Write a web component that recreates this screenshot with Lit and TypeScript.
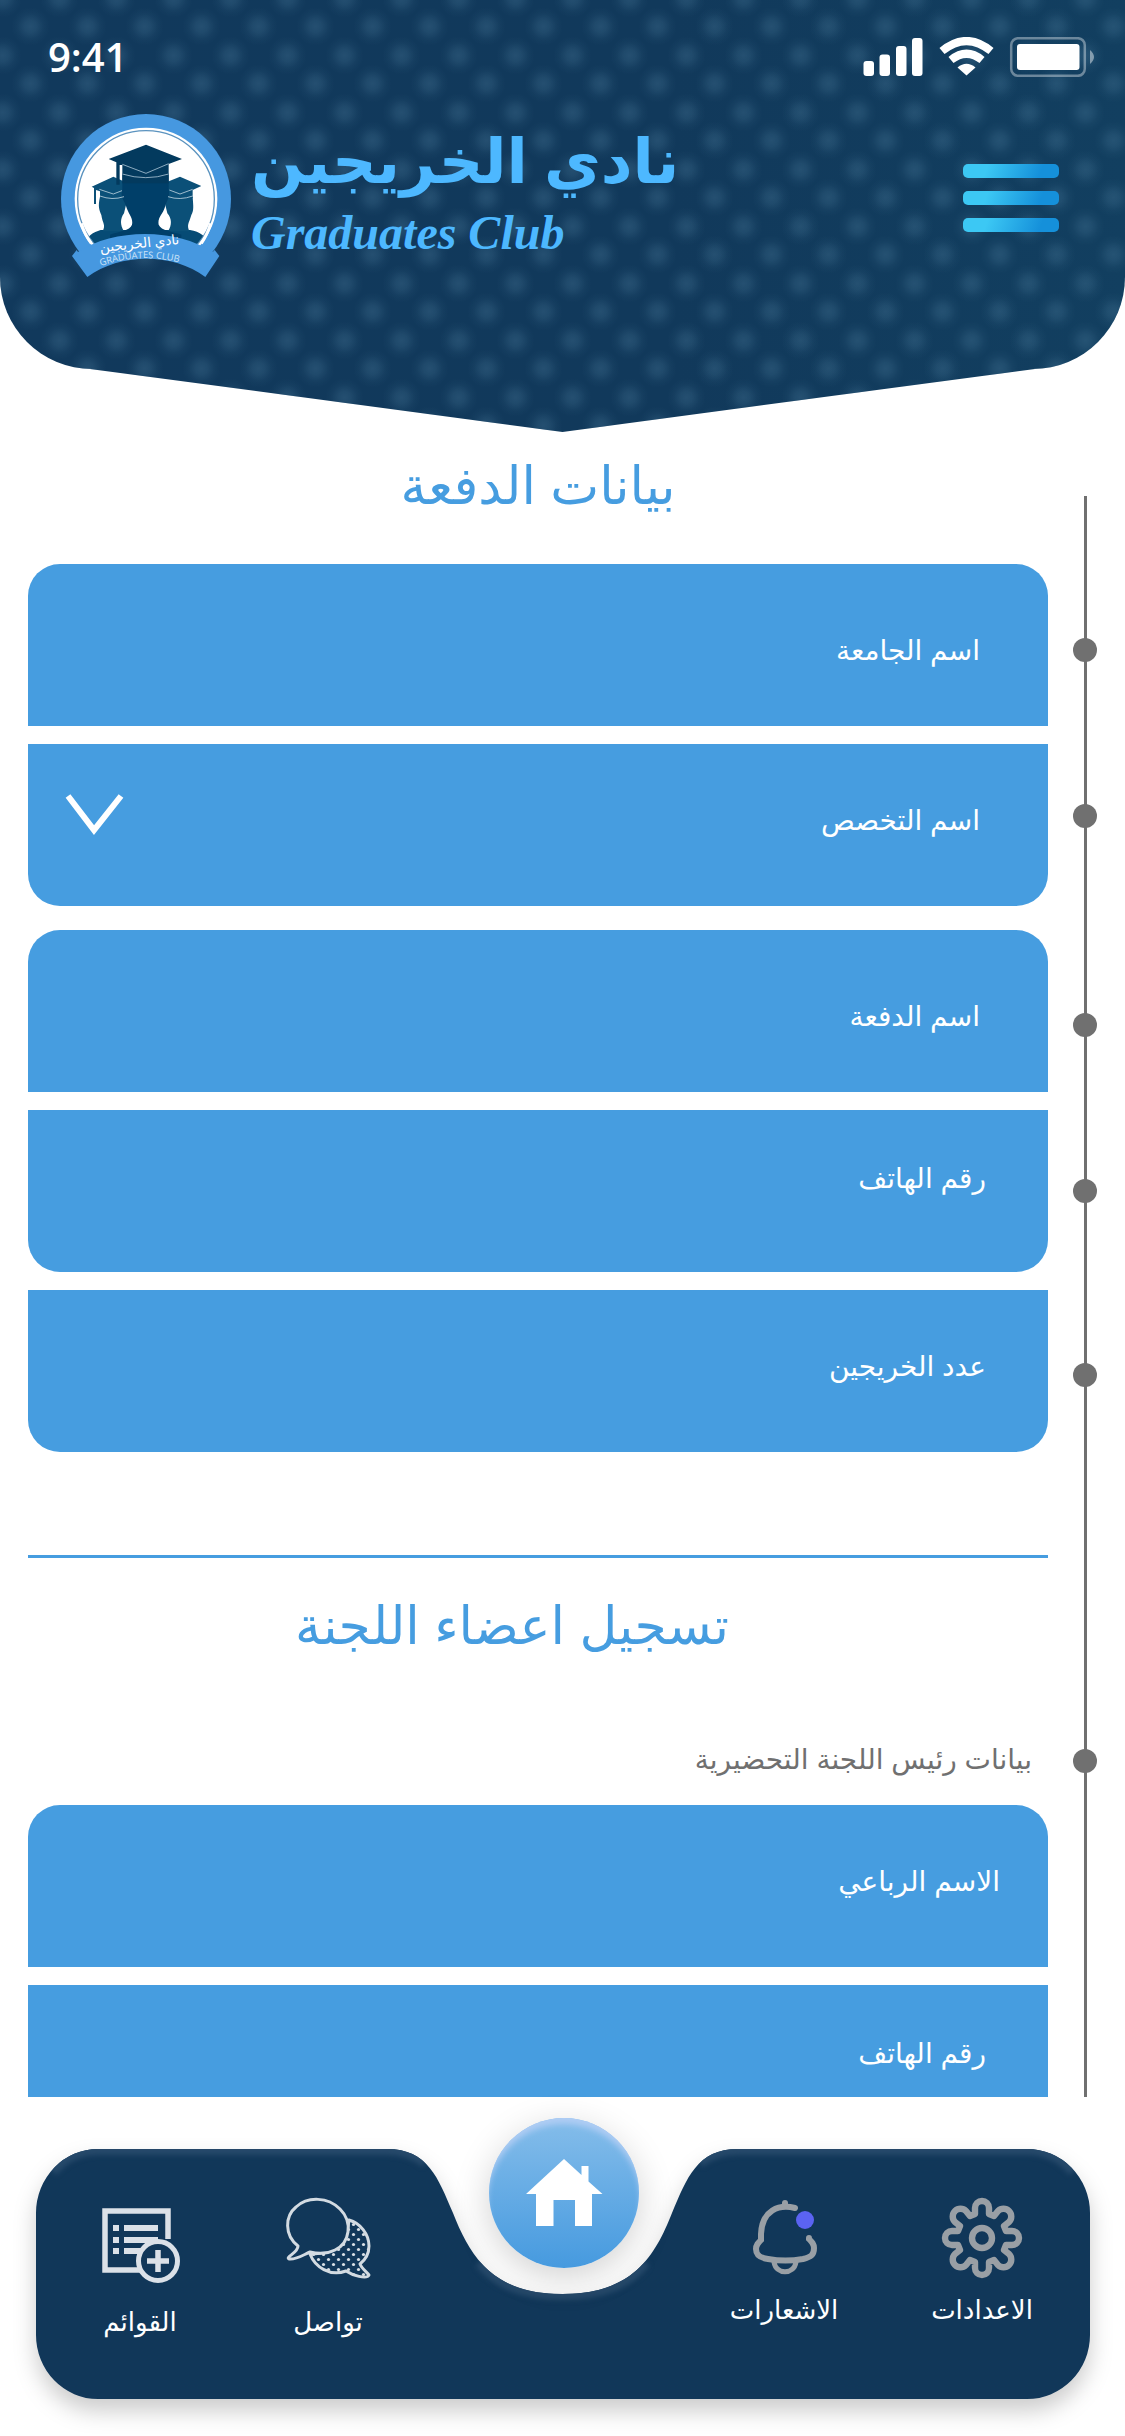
import { LitElement, html, css, svg } from "lit";
import { customElement, property } from "lit/decorators.js";
import { classMap } from "lit/directives/class-map.js";

interface Field {
  id: string;
  label: string;
  shape: "top" | "bottom";
  line: "low" | "middle" | "high";
  inset: "wide" | "medium" | "narrow";
  type?: "text" | "tel" | "number" | "select";
}

const classFields: Field[] = [
  { id: "university", label: "اسم الجامعة", shape: "top", line: "low", inset: "wide" },
  { id: "major", label: "اسم التخصص", shape: "bottom", line: "middle", inset: "wide", type: "select" },
];

const batchFields: Field[] = [
  { id: "batch", label: "اسم الدفعة", shape: "top", line: "low", inset: "wide" },
  { id: "phone", label: "رقم الهاتف", shape: "bottom", line: "high", inset: "medium", type: "tel" },
  { id: "count", label: "عدد الخريجين", shape: "bottom", line: "middle", inset: "medium", type: "number" },
];

const headFields: Field[] = [
  { id: "head-name", label: "الاسم الرباعي", shape: "top", line: "middle", inset: "narrow" },
  { id: "head-phone", label: "رقم الهاتف", shape: "bottom", line: "high", inset: "medium", type: "tel" },
];

const railStops = ["near", "near", "mid", "near", "half", "far"];

const gearIcon = svg`
  <g transform="translate(42 41)" fill="none" stroke="#999fa5" stroke-width="6.4" stroke-linejoin="round">
    <path d="M-7,-24 V-30 A7 7 0 0 1 7,-30 V-24 L12,-22 L16,-27 A7.6 7.6 0 0 1 27,-16 L22,-12 L24,-7
      H30 A7 7 0 0 1 30,7 H24 L22,12 L27,16 A7.6 7.6 0 0 1 16,27 L12,22 L7,24
      V30 A7 7 0 0 1 -7,30 V24 L-12,22 L-16,27 A7.6 7.6 0 0 1 -27,16 L-22,12 L-24,7
      H-30 A7 7 0 0 1 -30,-7 H-24 L-22,-12 L-27,-16 A7.6 7.6 0 0 1 -16,-27 L-12,-22 Z"/>
    <circle r="10"/>
  </g>`;

const bellIcon = svg`
  <g fill="none" stroke="#999fa5" stroke-width="6" stroke-linecap="round">
    <path d="M43 6 V9"/>
    <path d="M53 11 C37 7 20 13 19 37 V43 C16 46 14 48 14 52 C14 59 19 61 26 62 C37 64 50 64 61 62 C69 60 72 58 72 51 C72 47 70 45 67 42 V41"/>
    <path d="M32 65 C34 78 52 78 54 65" stroke-width="5"/>
  </g>
  <circle cx="63" cy="23" r="9" fill="#5b63f2"/>`;

const chatIcon = svg`
  <defs>
    <pattern id="chat-dots" width="10" height="10" patternUnits="userSpaceOnUse">
      <circle cx="2.5" cy="2.5" r="1.6" fill="#d9e0e6"/>
      <circle cx="7.5" cy="7.5" r="1.6" fill="#d9e0e6"/>
    </pattern>
  </defs>
  <path d="M63 23 C74 26 83 37 83 49 C83 57 79 63 74 67 C76 72 81 75 83 78 C81 83 66 78 60 74 C44 80 29 70 24 57 C48 58 62 44 63 23 Z"
    fill="url(#chat-dots)" stroke="#d3dbe2" stroke-width="3" stroke-linejoin="round"/>
  <path d="M12 49 C-2 38 -1 19 10 10 C22 -1 42 0 54 12 C67 25 64 46 49 53 C41 57 32 57 24 55 C17 58 10 63 3 62 C-1 60 12 56 12 49 Z"
    fill="#113759" stroke="#d3dbe2" stroke-width="3" stroke-linejoin="round"/>`;

const listIcon = svg`
  <g fill="none" stroke="#dbe1e8" stroke-width="5.5">
    <path d="M46 73 H7 V14 H70 V42"/>
  </g>
  <g fill="#dbe1e8">
    <rect x="15" y="28" width="6" height="6"/><rect x="26" y="28" width="34" height="6"/>
    <rect x="15" y="40" width="6" height="6"/><rect x="26" y="40" width="34" height="6"/>
    <rect x="15" y="51" width="6" height="6"/><rect x="26" y="51" width="20" height="6"/>
  </g>
  <circle cx="60" cy="64" r="19.5" fill="#113759" stroke="#dbe1e8" stroke-width="5"/>
  <path d="M49 64 H71 M60 53 V75" stroke="#dbe1e8" stroke-width="5.5"/>`;

@customElement("club-logo")
export class ClubLogo extends LitElement {
  static styles = css`
    :host { display: block; }
    .mark { display: block; width: 170px; height: 164px; overflow: visible; }
    .script { font-family: "Noto Sans", "DejaVu Sans", sans-serif; font-size: 41px; }
    .latin { font-family: "Open Sans", sans-serif; font-size: 28px; }
  `;

  render() {
    return html`
      <svg class="mark" viewBox="33 42 510 492" role="img" aria-label="Graduates Club">
        <defs>
          <clipPath id="disc"><circle cx="288" cy="297" r="204"/></clipPath>
          <clipPath id="upper"><rect x="33" y="42" width="510" height="416"/></clipPath>
        </defs>
        <g clip-path="url(#upper)">
          <circle cx="288" cy="297" r="255" fill="#4698e0"/>
          <circle cx="288" cy="297" r="214" fill="#fff"/>
          <circle cx="288" cy="297" r="205" fill="none" stroke="#5b93bf" stroke-width="4"/>
          <g clip-path="url(#disc)">
            <path d="M100 440 C110 405 130 398 152 390 L420 390 C450 394 470 410 480 440 Z" fill="#064b75"/>
            <g fill="#0b5078">
              <path d="M150 290 C143 320 148 330 154 345 C158 372 168 374 158 394 H222 C210 376 210 356 222 340 L234 290 Z"/>
              <path d="M428 290 C430 320 432 330 424 345 C416 372 410 374 418 394 H354 C366 376 366 356 352 340 L340 290 Z"/>
              <path d="M125 260 L190 230 L240 252 V290 C210 300 180 300 150 294 V274 L138 270 V312 H132 V264 Z"/>
              <path d="M454 258 L390 230 L336 252 V290 C366 300 396 300 428 294 V270 Z"/>
            </g>
            <path d="M217 220 H356 V268 C362 292 350 300 346 318 C338 345 322 352 326 374 C334 392 366 394 394 404 V460 H180 V404 C206 394 240 392 246 374 C250 352 236 345 228 318 C222 300 210 292 217 268 Z" fill="#003f69"/>
            <path d="M176 177 L288 134 L396 177 L356 192 V250 H217 V195 H209 V254 H199 V187 Z" fill="#033a5e"/>
            <path d="M217 193 L288 220 L356 191 M217 222 Q288 244 356 222" fill="none" stroke="#a9c3d4" stroke-width="2.5"/>
            <path d="M148 268 L190 282 L216 272 M150 288 Q186 302 222 290 M358 270 L390 282 L428 268 M354 290 Q390 302 428 288" fill="none" stroke="#bdd3df" stroke-width="2.5"/>
          </g>
        </g>
        <path d="M66 468 L80 450 L84 456 C190 384 380 384 488 456 L494 450 L508 468 L466 531 C370 458 210 458 112 531 Z" fill="#4698e0"/>
        <path d="M94 370 Q104 404 124 430 M482 370 Q472 404 454 430" stroke="#fff" stroke-width="9" fill="none"/>
        <text class="script" x="270" y="444" text-anchor="middle" fill="#fff" transform="rotate(-6 270 444)">نادي الخريجين</text>
        <path id="arc" d="M152 498 Q272 456 398 490" fill="none"/>
        <text class="latin" fill="#cfe4f7"><textPath href="#arc">GRADUATES CLUB</textPath></text>
      </svg>`;
  }
}

@customElement("form-field")
export class FormField extends LitElement {
  @property({ attribute: false }) field!: Field;

  static styles = css`
    :host { display: block; }
    .box {
      display: flex;
      align-items: center;
      gap: 16px;
      box-sizing: border-box;
      height: 162px;
      background: #469de0;
      color: #fff;
      font: 28px/48px "Liberation Sans", "DejaVu Sans", sans-serif;
    }
    .top { border-radius: 32px 32px 0 0; }
    .bottom { border-radius: 0 0 32px 32px; }
    .low { padding-block: 12px 0; }
    .middle { padding-block: 0 8px; }
    .high { padding-block: 0 24px; }
    .wide { padding-inline: 68px 36px; }
    .medium { padding-inline: 62px 36px; }
    .narrow { padding-inline: 48px 36px; }
    .name { flex: none; }
    .control {
      flex: 1;
      min-width: 0;
      height: 64px;
      border: 0;
      padding: 0;
      background: transparent;
      color: inherit;
      font: inherit;
      appearance: none;
      outline: none;
    }
    .chevron { flex: none; width: 60px; height: 44px; padding-bottom: 14px; }
  `;

  render() {
    const f = this.field;
    return html`
      <label class=${classMap({ box: true, [f.shape]: true, [f.line]: true, [f.inset]: true })} for=${f.id}>
        <span class="name">${f.label}</span>
        ${f.type === "select"
          ? html`<select class="control" id=${f.id}></select>
              <svg class="chevron" viewBox="0 0 60 44" aria-hidden="true">
                <path d="M4 4 L30 38 L57 4" fill="none" stroke="#fff" stroke-width="6"/>
              </svg>`
          : html`<input class="control" id=${f.id} type=${f.type ?? "text"}>`}
      </label>`;
  }
}

@customElement("app-root")
export class AppRoot extends LitElement {
  static styles = css`
    :host {
      display: block;
      direction: rtl;
      background: #fff;
      font-family: "Liberation Sans", "DejaVu Sans", sans-serif;
    }
    .screen { display: flex; flex-direction: column; height: 100vh; }

    .header {
      position: relative;
      flex: none;
      direction: ltr;
      box-sizing: border-box;
      height: 432px;
      isolation: isolate;
    }
    .header::before, .header::after {
      content: "";
      position: absolute;
      inset: 0;
      z-index: -1;
      background:
        radial-gradient(circle at 50% 50%, #4a7a9a57 0, #4a7a9a42 6px, #4a7a9a14 13px, #4a7a9a00 19px) 2px -2px / 57px 57px,
        radial-gradient(circle at 50% 50%, #4a7a9a57 0, #4a7a9a42 6px, #4a7a9a14 13px, #4a7a9a00 19px) 31px 27px / 57px 57px,
        linear-gradient(90deg, #11395c, #11395b 60%, #123f60);
    }
    .header::before { clip-path: inset(0 0 63px 0 round 0 0 92px 92px); }
    .header::after { clip-path: polygon(8% 85.4%, 92% 85.4%, 50% 100%); }

    .status {
      display: flex;
      align-items: center;
      justify-content: space-between;
      height: 114px;
      padding: 0 30px 0 48px;
      color: #fff;
    }
    .time { font: 600 40px/48px "Open Sans", sans-serif; }
    .signals { display: block; width: 232px; height: 40px; }

    .brand { display: flex; align-items: flex-start; padding: 0 66px 0 61px; }
    .names { display: flex; flex-direction: column; margin-inline-start: 20px; color: #4db8ff; }
    .arabic { margin: 0; font: bold 62px/90px "Noto Sans", "DejaVu Sans", sans-serif; direction: rtl; }
    .english { margin: 0; font: italic bold 48px/58px "Liberation Serif", serif; }
    .menu {
      display: flex;
      flex-direction: column;
      gap: 13px;
      width: 96px;
      margin: 50px 0 0 auto;
      padding: 0;
      border: 0;
      background: none;
    }
    .stripe { height: 14px; border-radius: 5px; background: linear-gradient(110deg, #3cc8f4 25%, #1590da 80%); }

    .main {
      flex: 1;
      min-height: 0;
      display: grid;
      grid-template-columns: 77px 1fr;
      align-items: start;
      padding-inline-end: 28px;
      overflow-y: auto;
      scrollbar-width: none;
    }
    .rail {
      display: flex;
      flex-direction: column;
      align-items: center;
      box-sizing: border-box;
      height: 100%;
      margin: 64px 0 0;
      padding: 0 0 0 0;
      padding-inline-start: 3px;
      list-style: none;
      background: linear-gradient(#707070, #707070) 36px 0 / 3px 100% no-repeat;
    }
    .stop { width: 24px; height: 24px; border-radius: 50%; background: #707070; }
    .near { margin-top: 142px; }
    .mid { margin-top: 185px; }
    .half { margin-top: 160px; }
    .far { margin-top: 362px; }

    .title { margin: 0; color: #469de0; font-size: 52px; line-height: 80px; font-weight: 400; text-align: center; }
    .first { padding: 14px 0 38px; }
    .second { padding: 28px 52px 0 0; }
    .group { display: flex; flex-direction: column; gap: 18px; margin: 0 0 24px; padding: 0; border: 0; }
    .last { margin-bottom: 103px; }
    .rule { height: 3px; margin: 0; border: 0; background: #469de0; }
    .caption { margin: 0; padding: 70px 16px 21px; color: #707070; font-size: 28px; line-height: 48px; font-weight: 400; }

    .nav { flex: none; display: grid; direction: ltr; height: 339px; }
    .shape { grid-area: 1 / 1; width: 100%; height: 339px; }
    .items { grid-area: 1 / 1; display: flex; justify-content: space-between; align-items: flex-start; }
    .side { flex: 1; display: flex; padding-top: 100px; }
    .start { padding-left: 46px; }
    .end { justify-content: flex-end; padding-right: 44px; }
    .item {
      display: flex;
      flex-direction: column;
      align-items: center;
      gap: 8px;
      width: 188px;
      color: #fff;
      text-decoration: none;
      font: 26px/40px "Noto Sans", "DejaVu Sans", sans-serif;
    }
    .end .item { width: 198px; }
    .start .item { gap: 20px; }
    .icon { width: 84px; height: 84px; overflow: visible; }
    .side { min-width: 0; box-sizing: border-box; }
    .home {
      flex: none;
      display: grid;
      place-items: center;
      width: 150px;
      height: 150px;
      margin-top: 21px;
      border-radius: 50%;
      background: linear-gradient(#85bdea, #469adf);
      box-shadow: 0 10px 36px rgb(0 0 0 / 18%), inset 0 8px 6px -2px #b0cdf4;
    }
    .house { width: 78px; height: 68px; }
  `;

  private fields(list: Field[]) {
    return list.map((f) => html`<form-field .field=${f}></form-field>`);
  }

  private item(label: string, icon: unknown) {
    return html`<a class="item" href="#">
      <svg class="icon" viewBox="0 0 84 84" aria-hidden="true">${icon}</svg>
      <span dir="rtl">${label}</span>
    </a>`;
  }

  render() {
    return html`
      <div class="screen">
        <header class="header">
          <div class="status">
            <span class="time">9:41</span>
            <svg class="signals" viewBox="863 37 232 40" aria-hidden="true">
              <g fill="#fff">
                <rect x="863.5" y="61" width="10.5" height="15" rx="3"/>
                <rect x="879.5" y="54.5" width="10.5" height="21.5" rx="3"/>
                <rect x="896" y="46" width="10.5" height="30" rx="3"/>
                <rect x="912" y="38" width="10.5" height="38" rx="3"/>
                <path d="M966.5 75.5 L957.5 67.5 Q966.5 60 975.5 67.5 Z"/>
              </g>
              <g fill="none" stroke="#fff" stroke-width="8">
                <path d="M942 51 Q966.5 31 991 51"/>
                <path d="M951 60 Q966.5 47.5 982 60"/>
              </g>
              <rect x="1011.2" y="38.2" width="73.6" height="37.6" rx="7" fill="none" stroke="#fff" stroke-opacity=".38" stroke-width="2.5"/>
              <rect x="1017" y="44" width="62.5" height="26" rx="3" fill="#fff"/>
              <path d="M1090 50 Q1098 57 1090 64 Z" fill="#fff" fill-opacity=".45"/>
            </svg>
          </div>
          <div class="brand">
            <club-logo></club-logo>
            <div class="names">
              <h1 class="arabic">نادي الخريجين</h1>
              <p class="english">Graduates Club</p>
            </div>
            <button class="menu" type="button" aria-label="القائمة">
              <span class="stripe"></span><span class="stripe"></span><span class="stripe"></span>
            </button>
          </div>
        </header>

        <main class="main">
          <ol class="rail" aria-hidden="true">
            ${railStops.map((s) => html`<li class=${classMap({ stop: true, [s]: true })}></li>`)}
          </ol>
          <form>
            <h2 class="title first">بيانات الدفعة</h2>
            <div class="group">${this.fields(classFields)}</div>
            <div class="group last">${this.fields(batchFields)}</div>
            <hr class="rule">
            <h2 class="title second">تسجيل اعضاء اللجنة</h2>
            <h3 class="caption">بيانات رئيس اللجنة التحضيرية</h3>
            <div class="group">${this.fields(headFields)}</div>
          </form>
        </main>

        <nav class="nav">
          <svg class="shape" viewBox="0 0 1125 339" preserveAspectRatio="none" aria-hidden="true">
            <defs>
              <filter id="soft" x="-5%" y="-20%" width="110%" height="150%" color-interpolation-filters="sRGB">
                <feDropShadow dx="0" dy="12" stdDeviation="11" flood-color="#000" flood-opacity=".2"/>
              </filter>
              <filter id="blur" x="-5%" y="-10%" width="110%" height="120%" color-interpolation-filters="sRGB">
                <feGaussianBlur stdDeviation="2.5"/>
              </filter>
              <path id="bar" d="M98 52 H387 C428 52 438 81 453 116 C470 159 492 197 562.5 197 C633 197 655 159 672 116 C687 81 697 52 738 52 H1027 A63 64 0 0 1 1090 116 V238 A63 64 0 0 1 1027 302 H98 A62 64 0 0 1 36 238 V116 A62 64 0 0 1 98 52 Z"/>
              <clipPath id="edge"><use href="#bar"/></clipPath>
            </defs>
            <use href="#bar" fill="#113759" filter="url(#soft)"/>
            <g clip-path="url(#edge)" fill="none" stroke="#26496a" stroke-width="12" filter="url(#blur)">
              <path d="M52 74 A62 64 0 0 1 98 52 H387 C404 52 416 57 426 65"/>
              <path d="M480 165 C496 185 520 197 562.5 197 C605 197 629 185 645 165"/>
              <path d="M699 65 C709 57 721 52 738 52 H1027 A63 64 0 0 1 1074 74"/>
            </g>
          </svg>
          <div class="items">
            <div class="side start">${this.item("القوائم", listIcon)}${this.item("تواصل", chatIcon)}</div>
            <a class="home" href="#" aria-label="الرئيسية">
              <svg class="house" viewBox="525 2158 78 68" aria-hidden="true">
                <path d="M526 2193 L564 2158 L581.5 2174 V2165 H588.5 V2180.5 L602.5 2193 H592 V2225 H575 V2199 H553.5 V2225 H536 V2193 Z" fill="#fff"/>
              </svg>
            </a>
            <div class="side end">${this.item("الاشعارات", bellIcon)}${this.item("الاعدادات", gearIcon)}</div>
          </div>
        </nav>
      </div>`;
  }
}
